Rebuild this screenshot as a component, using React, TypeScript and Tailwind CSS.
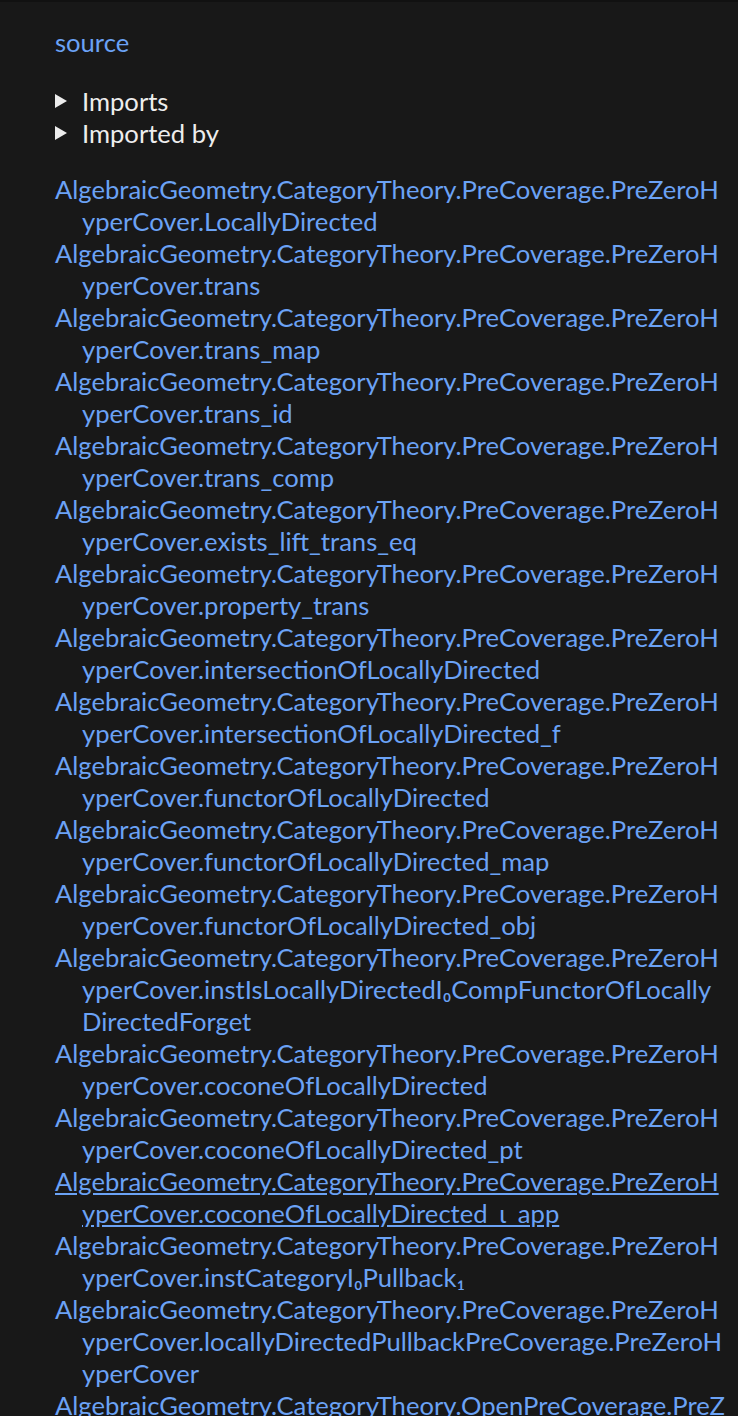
import React from "react";

const prefix = "AlgebraicGeometry.CategoryTheory.PreCoverage.PreZeroHyperCover.";

const names = [
  "LocallyDirected",
  "trans",
  "trans_map",
  "trans_id",
  "trans_comp",
  "exists_lift_trans_eq",
  "property_trans",
  "intersectionOfLocallyDirected",
  "intersectionOfLocallyDirected_f",
  "functorOfLocallyDirected",
  "functorOfLocallyDirected_map",
  "functorOfLocallyDirected_obj",
  "instIsLocallyDirectedI₀CompFunctorOfLocallyDirectedForget",
  "coconeOfLocallyDirected",
  "coconeOfLocallyDirected_pt",
  "coconeOfLocallyDirected_ι_app",
  "instCategoryI₀Pullback₁",
  "locallyDirectedPullbackPreCoverage.PreZeroHyperCover",
];

const Triangle = () => (
  <svg width="12" height="14" viewBox="0 0 12 14" className="mr-[15px] shrink-0">
    <path d="M0 0 L12 7 L0 14 Z" fill="#ececec" />
  </svg>
);

export default function App() {
  return (
    <div
      className="min-h-[1416px] bg-[#181818] border-t-2 border-[#111111] text-[25.6px] leading-[32px]"
      style={{ fontFamily: "Lato, 'Noto Sans', sans-serif" }}
    >
      <div className="pl-[55px] pr-[12px] pt-[24px]">
        <a className="text-[#6ba2f5]">source</a>

        <div className="mt-[27px] text-[#ededed]">
          <div className="flex items-center">
            <Triangle />
            Imports
          </div>
          <div className="flex items-center">
            <Triangle />
            Imported by
          </div>
        </div>

        <ul className="mt-[24px]">
          {names.map((n, i) => (
            <li key={i} className="break-all pl-[27px] -indent-[27px]">
              <a className={`text-[#6ba2f5] ${i === 15 ? "underline" : ""}`}>
                {prefix + n}
              </a>
            </li>
          ))}
          <li className="break-all pl-[27px] -indent-[27px]">
            <a className="text-[#6ba2f5]">
              AlgebraicGeometry.CategoryTheory.OpenPreCoverage.PreZeroHyperCover.LocallyDirected
            </a>
          </li>
        </ul>
      </div>
    </div>
  );
}
